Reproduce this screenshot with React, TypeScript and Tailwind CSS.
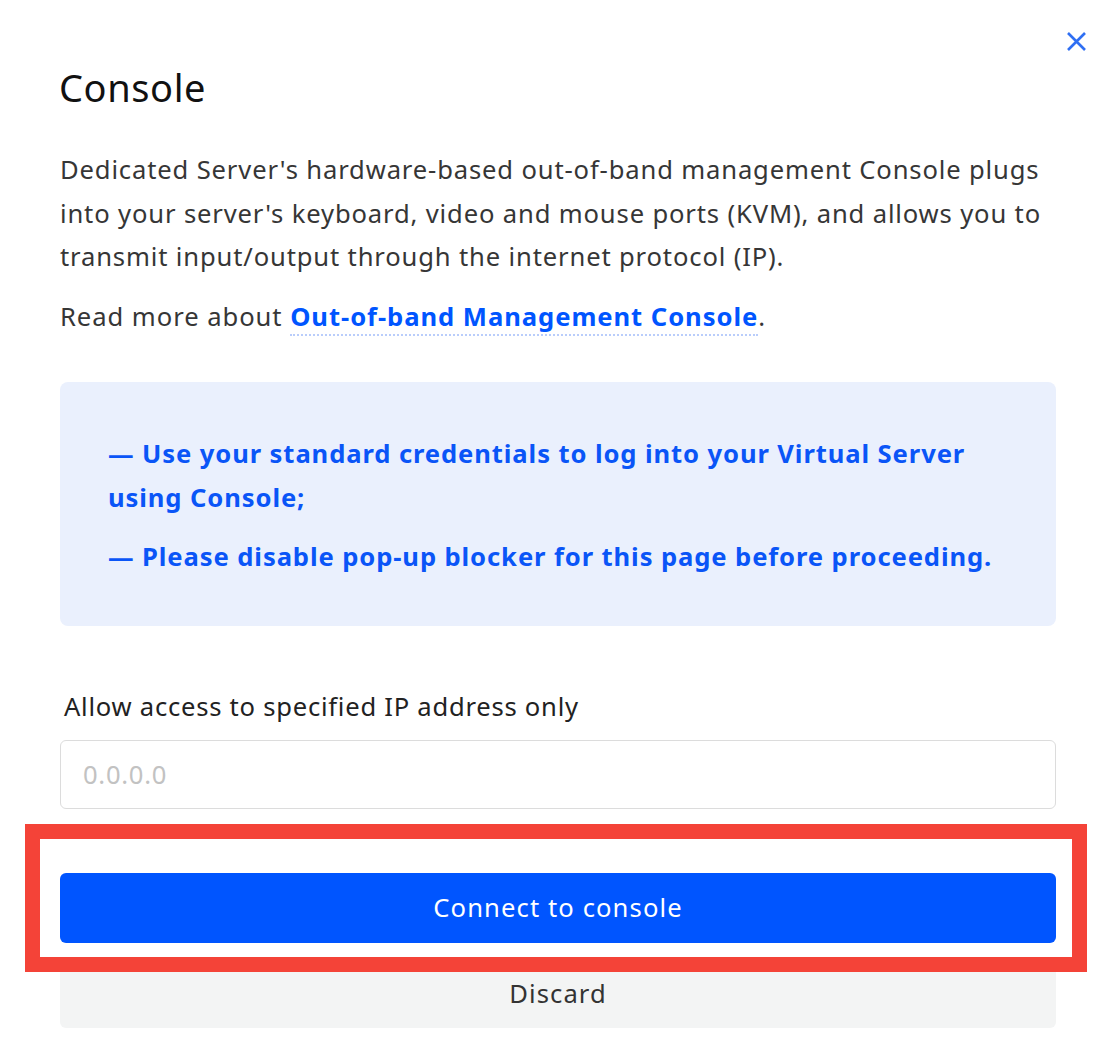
import React from "react";

export default function App() {
  const font = { fontFamily: '"Noto Sans", "Open Sans", sans-serif' };
  return (
    <div className="relative w-[1113px] h-[1063px] bg-white overflow-hidden" style={font}>
      <button className="absolute left-[1064px] top-[29px] w-[24px] h-[24px] flex items-center justify-center">
        <svg width="21" height="21" viewBox="0 0 21 21" fill="none">
          <path d="M2 2L19 19M19 2L2 19" stroke="#2f6ff3" strokeWidth="2.6" strokeLinecap="butt" />
        </svg>
      </button>

      <div className="pl-[60px] pr-[57px] pt-[64px] flex flex-col">
        <h2 className="text-[38px] leading-[46px] text-[#111111] font-normal tracking-[0.6px] -ml-[1px]">Console</h2>

        <p className="mt-[38px] text-[25.6px] leading-[43.5px] text-[#363636] tracking-[0.85px]">
          Dedicated Server's hardware-based out-of-band management Console plugs into your server's keyboard, video and mouse ports (KVM), and allows you to transmit input/output through the internet protocol (IP).
        </p>
        <p className="mt-[16px] text-[25.6px] leading-[43.5px] text-[#363636] tracking-[0.95px]">
          Read more about{" "}
          <a className="font-bold text-[#0055ff] border-b-2 border-dotted border-[#b9cdfb]">
            Out-of-band Management Console
          </a>
          .
        </p>

        <div className="mt-[44px] rounded-[8px] bg-[#eaf0fd] pl-[48px] pr-[40px] pt-[50px] pb-[47px] text-[25.6px] leading-[43.5px] font-bold text-[#0a55f7] tracking-[0.9px]">
          <p>— Use your standard credentials to log into your Virtual Server using Console;</p>
          <p className="mt-[16px]">— Please disable pop-up blocker for this page before proceeding.</p>
        </div>

        <label className="mt-[59px] pl-[4px] text-[25.6px] leading-[43.5px] text-[#222222] tracking-[0.75px]">
          Allow access to specified IP address only
        </label>
        <input
          className="mt-[12px] h-[69px] w-full rounded-[6px] border border-[#dcdcdc] px-[22px] text-[25.6px] tracking-[0.7px] text-[#333] placeholder:text-[#c2c2c2] outline-none"
          placeholder="0.0.0.0"
          style={font}
        />

        <div className="relative mt-[64px]">
          <button className="w-full h-[70px] rounded-[6px] bg-[#0055ff] text-white text-[25.6px] tracking-[1.1px]" style={font}>
            Connect to console
          </button>
          <div className="absolute left-[-35px] top-[-49px] right-[-31px] bottom-[-29px] border-[15px] border-[#f44338] pointer-events-none z-10" />
        </div>
        <button className="mt-[15px] w-full h-[70px] rounded-[6px] bg-[#f3f4f4] text-[#333333] text-[25.6px] tracking-[1.1px] pt-[2px]" style={font}>
          Discard
        </button>
      </div>
    </div>
  );
}
